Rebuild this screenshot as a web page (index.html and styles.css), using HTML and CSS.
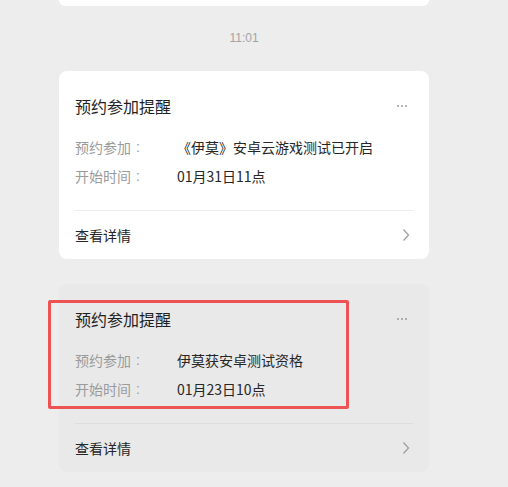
FILE: index.html
```html
<!DOCTYPE html>
<html lang="zh-CN">
<head>
<meta charset="utf-8">
<title>预约参加提醒</title>
<link rel="stylesheet" href="styles.css">
</head>
<body>
<div class="feed">
  <div class="card-tail"></div>
  <div class="time">11:01</div>

  <div class="card">
    <div class="card-head">
      <span class="card-title">预约参加提醒</span>
      <span class="more"><i></i><i></i><i></i></span>
    </div>
    <div class="rows">
      <div class="row"><span class="label">预约参加<span class="colon">:</span></span><span class="value">《伊莫》安卓云游戏测试已开启</span></div>
      <div class="row"><span class="label">开始时间<span class="colon">:</span></span><span class="value">01月31日11点</span></div>
    </div>
    <div class="card-foot">
      <span>查看详情</span>
      <svg class="chev" width="8" height="14" viewBox="0 0 8 14"><path d="M1.5 1.5 L6.5 7 L1.5 12.5" fill="none" stroke="#a0a0a0" stroke-width="1.3"/></svg>
    </div>
  </div>

  <div class="card card-active">
    <div class="card-head">
      <span class="card-title">预约参加提醒</span>
      <span class="more"><i></i><i></i><i></i></span>
    </div>
    <div class="rows">
      <div class="row"><span class="label">预约参加<span class="colon">:</span></span><span class="value">伊莫获安卓测试资格</span></div>
      <div class="row"><span class="label">开始时间<span class="colon">:</span></span><span class="value">01月23日10点</span></div>
    </div>
    <div class="card-foot">
      <span>查看详情</span>
      <svg class="chev" width="8" height="14" viewBox="0 0 8 14"><path d="M1.5 1.5 L6.5 7 L1.5 12.5" fill="none" stroke="#a0a0a0" stroke-width="1.3"/></svg>
    </div>
    <div class="highlight"></div>
  </div>
</div>
</body>
</html>
```
FILE: styles.css
```css
html, body {
  margin: 0;
  padding: 0;
  background: #ededed;
  font-family: "Microsoft YaHei", "Noto Sans CJK SC", "Noto Sans", sans-serif;
  color: #333;
  overflow: hidden;
  height: 487px;
}
.feed {
  width: 370px;
  margin-left: 59px;
}
.card-tail {
  height: 6px;
  background: #fff;
  border-radius: 0 0 8px 8px;
}
.time {
  text-align: center;
  font-size: 12px;
  line-height: 16px;
  color: #a3a3a3;
  padding-top: 24px;
  padding-bottom: 25px;
  font-family: "Liberation Sans", "Noto Sans CJK SC", sans-serif;
}
.card {
  position: relative;
  background: #fff;
  border-radius: 8px;
  padding: 0 16px;
}
.card-active {
  background: #e9e9e9;
  margin-top: 25px;
}
.card-head {
  display: flex;
  justify-content: space-between;
  align-items: center;
  padding-top: 24px;
  height: 22px;
}
.card-title {
  font-size: 16px;
  line-height: 22px;
  color: #1f1f1f;
}
.more {
  display: flex;
  gap: 2px;
  margin-right: 6px;
  margin-top: 0;
}
.more i {
  width: 2px;
  height: 2px;
  background: #9a9a9a;
  border-radius: 1px;
  display: block;
}
.rows {
  margin-top: 16px;
  border-bottom: 1px solid #ebebeb;
  padding-bottom: 19px;
}
.card-active .rows {
  border-bottom-color: #dedede;
}
.row {
  display: flex;
  font-size: 14px;
  line-height: 29px;
  height: 29px;
}
.label {
  display: flex;
  width: 102px;
  color: #9b9b9b;
}
.colon {
  font-family: "Liberation Sans", sans-serif;
  margin-left: 5px;
}
.value {
  color: #262626;
}
.card-foot {
  display: flex;
  justify-content: space-between;
  align-items: center;
  height: 48px;
  font-size: 14px;
  color: #262626;
}
.chev {
  margin-right: 3px;
}
.highlight {
  position: absolute;
  left: -11px;
  top: 16px;
  width: 301px;
  height: 109px;
  box-sizing: border-box;
  border: 3px solid #ee5353;
  border-radius: 2px;
}
```
